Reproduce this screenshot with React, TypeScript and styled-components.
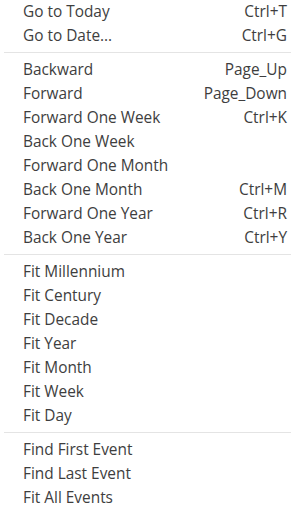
import React from 'react';
import styled, { createGlobalStyle } from 'styled-components';

const GlobalStyle = createGlobalStyle`
  body {
    margin: 0;
    background: #ffffff;
  }
`;

const Menu = styled.div`
  width: 295px;
  height: 510px;
  background: #ffffff;
  display: flex;
  flex-direction: column;
  font-family: 'Open Sans', 'Liberation Sans', sans-serif;
  font-size: 15.4px;
  color: #3e3e3e;
  overflow: hidden;
`;

const Item = styled.div`
  height: 24px;
  padding: 0 8px 1px 23px;
  box-sizing: border-box;
  display: flex;
  align-items: center;
  justify-content: space-between;
  white-space: nowrap;
`;

const Label = styled.span``;

const Shortcut = styled.span`
  color: #3e3e3e;
`;

const Separator = styled.div`
  height: 1px;
  margin: 4px 4px 5px 4px;
  background: #e4e4e4;
`;

type Entry = { label: string; shortcut?: string } | 'sep';

const entries: Entry[] = [
  { label: 'Go to Today', shortcut: 'Ctrl+T' },
  { label: 'Go to Date...', shortcut: 'Ctrl+G' },
  'sep',
  { label: 'Backward', shortcut: 'Page_Up' },
  { label: 'Forward', shortcut: 'Page_Down' },
  { label: 'Forward One Week', shortcut: 'Ctrl+K' },
  { label: 'Back One Week' },
  { label: 'Forward One Month' },
  { label: 'Back One Month', shortcut: 'Ctrl+M' },
  { label: 'Forward One Year', shortcut: 'Ctrl+R' },
  { label: 'Back One Year', shortcut: 'Ctrl+Y' },
  'sep',
  { label: 'Fit Millennium' },
  { label: 'Fit Century' },
  { label: 'Fit Decade' },
  { label: 'Fit Year' },
  { label: 'Fit Month' },
  { label: 'Fit Week' },
  { label: 'Fit Day' },
  'sep',
  { label: 'Find First Event' },
  { label: 'Find Last Event' },
  { label: 'Fit All Events' },
];

export default function App() {
  return (
    <>
      <GlobalStyle />
      <Menu>
        {entries.map((e, i) =>
          e === 'sep' ? (
            <Separator key={i} />
          ) : (
            <Item key={i}>
              <Label>{e.label}</Label>
              {e.shortcut && <Shortcut>{e.shortcut}</Shortcut>}
            </Item>
          )
        )}
      </Menu>
    </>
  );
}
